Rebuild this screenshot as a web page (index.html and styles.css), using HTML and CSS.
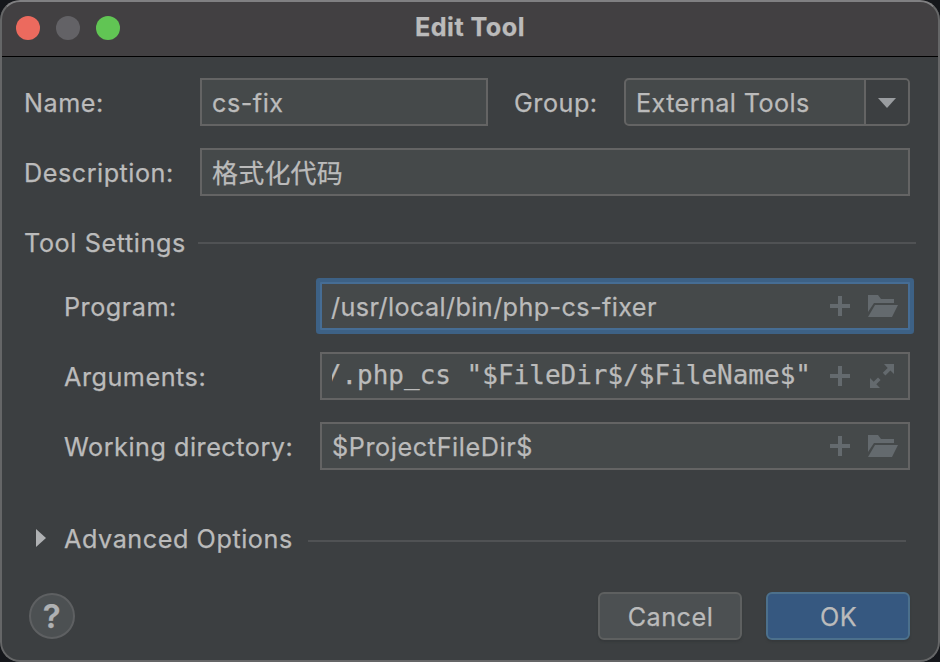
FILE: index.html
```html
<!DOCTYPE html>
<html lang="en">
<head>
<meta charset="utf-8">
<title>Edit Tool</title>
<link rel="stylesheet" href="styles.css">
</head>
<body>
<svg class="sprite" width="0" height="0" aria-hidden="true">
  <symbol id="plus" viewBox="0 0 20 20"><path d="M8 0h4v8h8v4h-8v8H8v-8H0V8h8z"/></symbol>
  <symbol id="folder" viewBox="0 0 30 22"><path d="M0 0h10l3 4h13v4H6L0 17z"/><path d="M7 10h23l-6 12H0z"/></symbol>
  <symbol id="expand" viewBox="0 0 24 24"><path d="M14 0h10v10l-3.600-3.600-5 5-2.600-2.600 4.900-4.900z"/><path d="M0 14l3.700 3.700 4.300-4.300 2.600 2.600-4.300 4.300L10 24H0z"/></symbol>
</svg>
<main class="window">
  <header class="titlebar">
    <div class="lights"><i class="light close"></i><i class="light minimize"></i><i class="light zoom"></i></div>
    <h1 class="title">Edit Tool</h1>
  </header>
  <form class="body">
    <div class="row">
      <label class="label">Name:</label>
      <div class="field name-field">cs-fix</div>
      <label class="group-label">Group:</label>
      <div class="select"><span class="select-value">External Tools</span>
        <span class="select-arrow"><svg width="18" height="10" viewBox="0 0 18 10"><path d="M0 0h18L9 10z"/></svg></span></div>
    </div>
    <div class="row">
      <label class="label">Description:</label>
      <div class="field grow cjk">格式化代码</div>
    </div>
    <div class="section"><span class="heading">Tool Settings</span><span class="rule"></span></div>
    <div class="row nested">
      <label class="label">Program:</label>
      <div class="field grow focused"><span class="value path">/usr/local/bin/php-cs-fixer</span>
        <svg class="plus"><use href="#plus"/></svg><svg class="folder"><use href="#folder"/></svg></div>
    </div>
    <div class="row nested">
      <label class="label">Arguments:</label>
      <div class="field grow"><span class="value mono"><span>/.php_cs "$FileDir$/$FileName$"</span></span>
        <svg class="plus"><use href="#plus"/></svg><svg class="expand"><use href="#expand"/></svg></div>
    </div>
    <div class="row nested">
      <label class="label">Working directory:</label>
      <div class="field grow"><span class="value project">$ProjectFileDir$</span>
        <svg class="plus"><use href="#plus"/></svg><svg class="folder"><use href="#folder"/></svg></div>
    </div>
    <div class="section advanced">
      <svg class="disclosure" width="10" height="18" viewBox="0 0 10 18"><path d="M0 0l10 9-10 9z"/></svg>
      <span>Advanced Options</span><span class="rule"></span>
    </div>
    <footer class="footer">
      <div class="help">?</div>
      <div class="button cancel">Cancel</div>
      <div class="button primary">OK</div>
    </footer>
  </form>
</main>
</body>
</html>
```
FILE: styles.css
```css
* { box-sizing: border-box; }
body { margin: 0; background: #15171b; color: #bbbbbb; font: 400 25.2px/30px Inter, "Noto Sans CJK SC", sans-serif; letter-spacing: 0.52px; -webkit-text-stroke: 0.25px currentColor; }
.sprite { display: block; position: absolute; }
.window { position: relative; width: 940px; height: 662px; border-radius: 20px; overflow: hidden; background: #3c3f41; }
.window::after { content: ""; position: absolute; inset: 0; border: 2px solid #656667; border-top-color: #808082; border-radius: 20px; pointer-events: none; }
.titlebar { display: grid; grid-template-columns: 1fr auto 1fr; align-items: center; height: 57px; padding: 0 16px 2px; background: #424042; border-bottom: 1px solid #000; }
.lights { display: flex; gap: 16px; padding-top: 2px; }
.light { width: 24px; height: 24px; border-radius: 50%; }
.close { background: #ec6a5e; }
.minimize { background: #636266; }
.zoom { background: #61c554; }
.title { margin: 0; font-size: 25.2px; font-weight: 700; line-height: 30px; letter-spacing: 0.48px; }
.body { padding: 21px 30px 0 24px; }
.row { display: flex; align-items: center; height: 48px; margin-bottom: 22px; white-space: nowrap; }
.label { flex: none; width: 176px; padding-top: 2px; }
.nested { padding-left: 40px; }
.nested .label { width: 256px; }
.field { display: flex; align-items: center; height: 48px; padding: 0 10px; background: #45494a; border: 2px solid #646464; }
.name-field { width: 288px; padding-top: 2px; }
.grow { flex: 1; min-width: 0; }
.cjk { font-family: "Noto Sans CJK SC", sans-serif; font-size: 26px; letter-spacing: 0.2px; }
.focused { border-color: #466d94; box-shadow: 0 0 0 4px #3d6185; border-radius: 1px; }
.group-label { width: 136px; padding: 2px 0 0 26px; }
.select { display: flex; flex: 1; height: 48px; border: 2px solid #646464; border-radius: 5px; background: #45494a; align-items: center; padding-left: 10px; }
.select-value { flex: 1; padding-top: 2px; letter-spacing: 0.4px; }
.select-arrow { display: flex; align-items: center; justify-content: center; width: 44px; height: 44px; padding-top: 2px; border-left: 2px solid #646464; background: #3c3f41; border-radius: 0 3px 3px 0; }
.select-arrow path { fill: #9a9da0; }
.section { display: flex; align-items: center; height: 30px; margin: 32px -6px 24px 0; white-space: nowrap; }
.heading { letter-spacing: 0.6px; }
.rule { flex: 1; height: 2px; margin-left: 12px; background: #505254; }
.value { flex: 1; min-width: 0; overflow: hidden; padding-top: 2px; }
.path { letter-spacing: 0.4px; margin-left: -1px; }
.project { letter-spacing: 0.6px; }
.mono { display: flex; justify-content: flex-end; margin: -4px 19px 0 0; font: 26px/32px "DejaVu Sans Mono", monospace; letter-spacing: 0; }
.plus { width: 20px; height: 20px; fill: #646a6e; flex: none; margin-right: 18px; }
.folder { width: 30px; height: 22px; fill: #646a6e; flex: none; }
.expand { width: 24px; height: 24px; fill: #646a6e; flex: none; margin: 0 4px 0 2px; }
.advanced { margin: 54px 4px 38px 0; letter-spacing: 0.56px; }
.advanced .rule { margin: 4px 0 0 15px; }
.disclosure { margin: -2px 18px 0 12px; fill: #afb1b3; }
.footer { display: flex; align-items: center; height: 48px; }
.help { width: 46px; height: 46px; margin: 0 auto 0 5px; border: 2px solid #5e6062; border-radius: 50%; background: #4c5052; color: #afb1b3; font-size: 33px; font-weight: 600; line-height: 43px; text-align: center; }
.button { width: 144px; height: 48px; padding-left: 1px; border: 2px solid #5e6060; border-radius: 6px; background: #4c5052; line-height: 46px; text-align: center; box-shadow: 0 2px 2px #36393b; }
.primary { margin-left: 24px; background: #365880; border-color: #4c708c; }
```
